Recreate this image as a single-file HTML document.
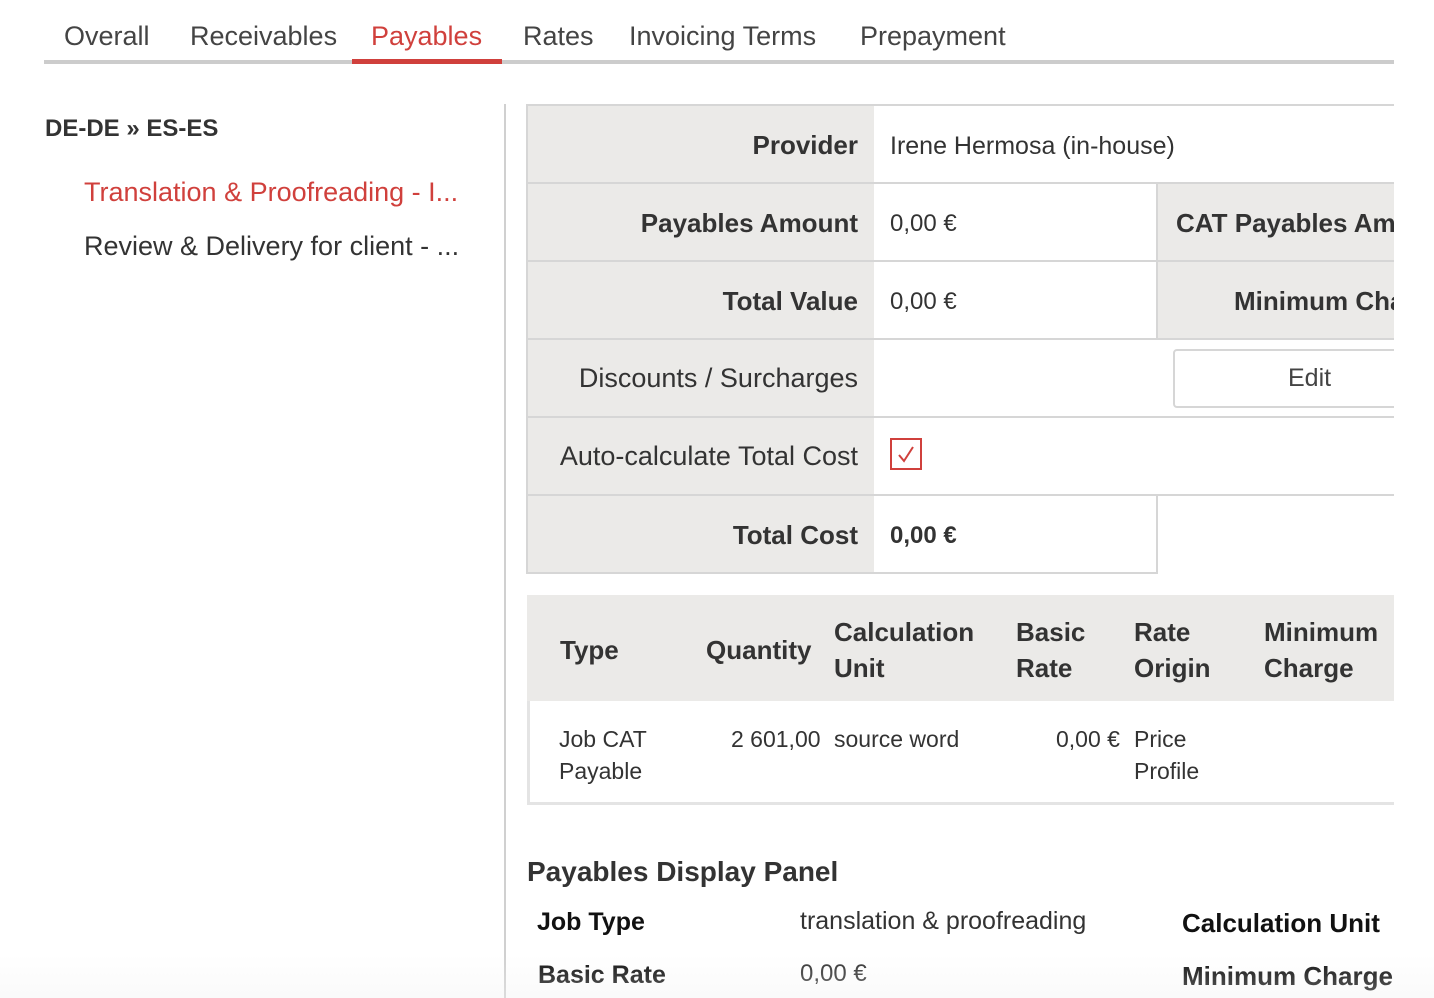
<!DOCTYPE html>
<html><head><meta charset="utf-8"><style>
*{margin:0;padding:0;box-sizing:border-box}
body{width:1434px;height:998px;overflow:hidden;background:#fff;font-family:"Liberation Sans",sans-serif;color:#333;position:relative}
.a{position:absolute;white-space:nowrap}
.tab{top:21px;font-size:27px;color:#444}
.g{background:#ebeae8}
.lbl{font-weight:bold;font-size:26px;text-align:right;right:0}
.hl{position:absolute;background:#d6d6d6}
.th{font-weight:bold;font-size:26px;line-height:36px}
.td{font-size:23px;line-height:32px}
</style></head><body>
<div class="a tab" style="left:64px">Overall</div>
<div class="a tab" style="left:190px">Receivables</div>
<div class="a tab" style="left:371px;color:#d0403c">Payables</div>
<div class="a tab" style="left:523px">Rates</div>
<div class="a tab" style="left:629px">Invoicing Terms</div>
<div class="a tab" style="left:860px">Prepayment</div>
<div class="hl" style="left:44px;top:60px;width:1350px;height:4px;background:#cccccc"></div>
<div class="hl" style="left:352px;top:59px;width:150px;height:5px;background:#d0403c"></div>

<div class="a" style="left:45px;top:115px;font-size:24px;font-weight:bold;color:#333">DE-DE » ES-ES</div>
<div class="a" style="left:84px;top:177px;font-size:27px;color:#d0403c">Translation &amp; Proofreading - I...</div>
<div class="a" style="left:84px;top:231px;font-size:27px;color:#333">Review &amp; Delivery for client - ...</div>
<div class="hl" style="left:504px;top:104px;width:2px;height:894px;background:#d0d0d0"></div>

<div class="a g" style="left:526px;top:104px;width:348px;height:470px;border:2px solid #d6d6d6;border-right:none"></div>
<div class="a g" style="left:1157px;top:183px;width:237px;height:156px"></div>
<div class="hl" style="left:526px;top:104px;width:868px;height:2px"></div>
<div class="hl" style="left:526px;top:182px;width:868px;height:2px"></div>
<div class="hl" style="left:526px;top:260px;width:868px;height:2px"></div>
<div class="hl" style="left:526px;top:338px;width:868px;height:2px"></div>
<div class="hl" style="left:526px;top:416px;width:868px;height:2px"></div>
<div class="hl" style="left:526px;top:494px;width:868px;height:2px"></div>
<div class="hl" style="left:526px;top:572px;width:632px;height:2px"></div>
<div class="hl" style="left:1156px;top:183px;width:2px;height:156px"></div>
<div class="hl" style="left:1156px;top:495px;width:2px;height:79px"></div>

<div class="a lbl" style="left:526px;width:332px;top:130px">Provider</div>
<div class="a lbl" style="left:526px;width:332px;top:208px">Payables Amount</div>
<div class="a lbl" style="left:526px;width:332px;top:286px">Total Value</div>
<div class="a lbl" style="left:526px;width:332px;top:363px;font-weight:normal;font-size:27px">Discounts / Surcharges</div>
<div class="a lbl" style="left:526px;width:332px;top:441px;font-weight:normal;font-size:27px">Auto-calculate Total Cost</div>
<div class="a lbl" style="left:526px;width:332px;top:520px">Total Cost</div>
<div class="a" style="left:890px;top:132px;font-size:25px">Irene Hermosa (in-house)</div>
<div class="a" style="left:890px;top:210px;font-size:24px">0,00 €</div>
<div class="a" style="left:890px;top:288px;font-size:24px">0,00 €</div>
<div class="a" style="left:890px;top:522px;font-size:24px;font-weight:bold">0,00 €</div>
<div class="a" style="left:1157px;top:183px;width:237px;height:78px;overflow:hidden"><div class="a" style="left:19px;top:25px;font-size:26px;font-weight:bold">CAT Payables Amount</div></div>
<div class="a" style="left:1157px;top:261px;width:237px;height:78px;overflow:hidden"><div class="a" style="left:77px;top:25px;font-size:26px;font-weight:bold">Minimum Charge</div></div>
<div class="a" style="left:1157px;top:340px;width:237px;height:76px;overflow:hidden">
<div class="a" style="left:16px;top:9px;width:260px;height:59px;border:2px solid #d6d6d6;border-radius:4px;background:#fff"></div>
<div class="a" style="left:131px;top:24px;font-size:25px;color:#444">Edit</div>
</div>
<div class="a" style="left:890px;top:438px;width:32px;height:32px;border:2px solid #d0403c"></div>
<svg class="a" style="left:890px;top:438px" width="32" height="32"><path d="M9 17 L14 23 L23 9" fill="none" stroke="#d0403c" stroke-width="2"/></svg>

<div class="a g" style="left:527px;top:595px;width:867px;height:106px"></div>
<div class="a" style="left:527px;top:701px;width:867px;height:104px;border-left:3px solid #e4e4e4;border-bottom:3px solid #e4e4e4"></div>
<div class="a th" style="left:560px;top:632px">Type</div>
<div class="a th" style="left:706px;top:632px">Quantity</div>
<div class="a th" style="left:834px;top:614px">Calculation<br>Unit</div>
<div class="a th" style="left:1016px;top:614px">Basic<br>Rate</div>
<div class="a th" style="left:1134px;top:614px">Rate<br>Origin</div>
<div class="a th" style="left:1264px;top:614px">Minimum<br>Charge</div>
<div class="a td" style="left:559px;top:723px">Job CAT<br>Payable</div>
<div class="a td" style="left:731px;top:723px">2 601,00</div>
<div class="a td" style="left:834px;top:723px">source word</div>
<div class="a td" style="left:1056px;top:723px">0,00 €</div>
<div class="a td" style="left:1134px;top:723px">Price<br>Profile</div>

<div class="a" style="left:527px;top:856px;font-size:28px;font-weight:bold">Payables Display Panel</div>
<div class="a" style="left:537px;top:908px;font-size:25px;font-weight:bold;color:#111">Job Type</div>
<div class="a" style="left:800px;top:907px;font-size:25px">translation &amp; proofreading</div>
<div class="a" style="left:1182px;top:908px;font-size:26px;font-weight:bold;color:#111">Calculation Unit</div>
<div class="a" style="left:538px;top:961px;font-size:25px;font-weight:bold;color:#111">Basic Rate</div>
<div class="a" style="left:800px;top:960px;font-size:24px">0,00 €</div>
<div class="a" style="left:1182px;top:961px;width:212px;overflow:hidden;font-size:26px;font-weight:bold;color:#111">Minimum Charge</div>
<div class="a" style="left:0;top:955px;width:1434px;height:43px;background:linear-gradient(rgba(240,240,240,0),rgba(240,240,240,0.35));pointer-events:none"></div>
</body></html>
